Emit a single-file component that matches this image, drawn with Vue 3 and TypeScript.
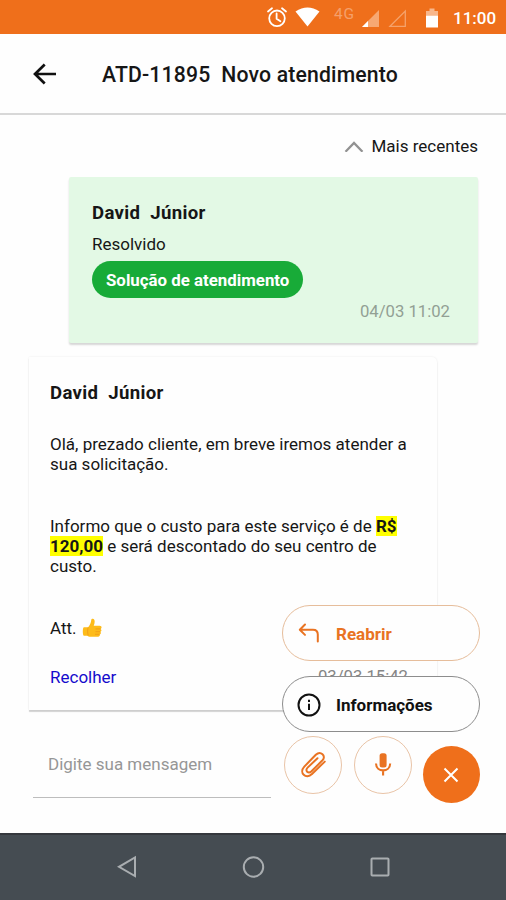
<script setup lang="ts">
interface Highlight {
  text: string
  mark: boolean
}

const title = 'ATD-11895\u00a0 Novo atendimento'
const author = 'David\u00a0 Júnior'
const cost: Highlight[] = [
  { text: 'Informo que o custo para este serviço é de ', mark: false },
  { text: 'R$ 120,00', mark: true },
  { text: ' e será descontado do seu centro de custo.', mark: false },
]
</script>

<template>
  <div class="screen">
    <div class="status">
      <svg class="status-icons" viewBox="0 0 186 34" fill="none">
        <g stroke="#fff" stroke-width="1.8" stroke-linecap="round">
          <circle cx="20" cy="18.300" r="7.800" />
          <path d="M11 11.500l4-3.200M29 11.500l-4-3.200M19.600 13.500v5.200l3.800 2.600" />
        </g>
        <path d="M38.500 11.500Q50.500 3.500 62.500 11.500L50.500 26.500z" fill="#fff" />
        <path d="M105 27L122 10v17z" fill="#f7a873" />
        <path d="M105 27l6-6v6z" fill="#fff" />
        <path d="M133 26.300L148.300 11v15.300z" stroke="#f5a26b" stroke-width="1.300" />
        <path d="M169 11h3.500V8.500h5V11h3.500v4.500h-12z" fill="#f8b78c" />
        <path d="M169 15.500h12V27.500h-12z" fill="#fff" />
      </svg>
      <span class="network">4G</span>
      <span class="clock">11:00</span>
    </div>

    <header class="header">
      <svg class="back" viewBox="0 0 26 24" fill="none" stroke="#111" stroke-width="2.700">
        <path d="M24 12H3M12.700 2.500L3 12l9.700 9.500" />
      </svg>
      <h1 class="title">{{ title }}</h1>
    </header>

    <main class="thread">
      <div class="recent">
        <svg class="chevron" viewBox="0 0 20 12" fill="none" stroke="#929292" stroke-width="2.300">
          <path d="M1.500 11.700L10 3l8.500 8.700" />
        </svg>
        <span>Mais recentes</span>
      </div>

      <article class="card resolved">
        <h2 class="author">{{ author }}</h2>
        <p class="state">Resolvido</p>
        <span class="badge">Solução de atendimento</span>
        <time class="time">04/03 11:02</time>
      </article>

      <article class="card message">
        <h2 class="author">{{ author }}</h2>
        <p class="text greeting">Olá, prezado cliente, em breve iremos atender a sua solicitação.</p>
        <p class="text cost"><template v-for="(part, i) in cost" :key="i"><mark v-if="part.mark">{{ part.text }}</mark><template v-else>{{ part.text }}</template></template></p>
        <p class="text sign">
          <span>Att.</span>
          <svg class="thumb" viewBox="0 0 20 20">
            <path d="M2 9.200h4.200C8 7 9 4.800 9.200 2.300 9.300.5 11.700.4 12.400 2c.6 1.700.1 4-.7 5.800h6c2.200 0 2.400 2.600.9 3.100 1.300.8 1 2.500-.3 2.800 1 .9.600 2.300-.6 2.600.6 1.100-.1 2.400-1.500 2.400H8.500c-1.500 0-2.500-.5-3.500-1H2c-1.600 0-1.600-8.500 0-8.500z" fill="#fdbb19" />
            <path d="M6.200 9.300c-.8 2.300-.8 5.300 0 8.100M13.500 10.900h5M13.500 13.700h4.700M13 16.300h4.500" fill="none" stroke="#ef9717" stroke-width=".8" />
          </svg>
        </p>
        <footer class="card-foot">
          <a class="collapse">Recolher</a>
          <time class="sent">03/03 15:42</time>
        </footer>
      </article>
    </main>

    <section class="composer">
      <div class="field">Digite sua mensagem</div>
    </section>

    <nav class="system">
      <svg viewBox="0 0 24 24"><path d="M21 2.500v18.500L5 11.800z" /></svg>
      <svg viewBox="0 0 24 24"><circle cx="12.500" cy="12" r="9.700" /></svg>
      <svg viewBox="0 0 24 24"><rect x="3.500" y="3.500" width="17" height="17" rx=".8" /></svg>
    </nav>

    <div class="actions">
      <button class="pill reopen">
        <svg viewBox="0 0 24 24" fill="none" stroke="currentColor" stroke-width="2" stroke-linecap="round" stroke-linejoin="round">
          <path d="M8 2.500L2.800 7.700 8 12.900M3.500 7.700H16c3.200 0 4.800 1.700 4.800 4.800V19.500" />
        </svg>
        <span>Reabrir</span>
      </button>
      <button class="pill info">
        <svg viewBox="0 0 24 24" fill="none" stroke="currentColor" stroke-width="2">
          <circle cx="12" cy="12" r="10.500" />
          <path d="M12 10.700v6.300M12 6.700v2.200" />
        </svg>
        <span>Informações</span>
      </button>
      <div class="round-row">
        <button class="round">
          <svg viewBox="0 0 30 30" fill="none" stroke="#e97322" stroke-width="2" stroke-linecap="round" stroke-linejoin="round">
            <path d="M26.800 11.600L14 24C8 29.800.5 22.800 6.300 16.600L17.800 4.800C22.600 .2 28.600 6 24.500 10.300L13.500 21.200C10.200 24.300 6.500 20.600 9.600 17.600L19.500 8.200" />
          </svg>
        </button>
        <button class="round">
          <svg viewBox="0 0 30 30" fill="none">
            <rect x="11.600" y="3.300" width="7" height="14.200" rx="2.500" fill="#e97322" />
            <path d="M8 13.500c.2 9.200 14 9.200 14.200 0M15.100 20.500v5" stroke="#e97322" stroke-width="2.100" />
          </svg>
        </button>
        <button class="fab">
          <svg viewBox="0 0 24 24" fill="none" stroke="#fff" stroke-width="2">
            <path d="M4.500 5.500l13 13M17.500 5.500l-13 13" />
          </svg>
        </button>
      </div>
    </div>
  </div>
</template>

<style>
body {
  margin: 0;
  background: #fefefe;
}
</style>

<style scoped>
* {
  box-sizing: border-box;
}

.screen {
  position: relative;
  display: flex;
  flex-direction: column;
  width: 506px;
  height: 900px;
  overflow: hidden;
  background: #fefefe;
  color: #161616;
  font-family: Roboto, "Liberation Sans", sans-serif;
  font-size: 17px;
  line-height: 20px;
}

h1,
h2,
p {
  margin: 0;
}

.status {
  position: relative;
  display: flex;
  justify-content: flex-end;
  align-items: center;
  flex: none;
  height: 34px;
  padding-right: 10px;
  background: #ef6f1b;
  color: #fff;
}

.status-icons {
  width: 186px;
  height: 34px;
  margin-right: 10px;
}

.network {
  position: absolute;
  left: 334px;
  top: 4px;
  font-size: 15.5px;
  letter-spacing: 0.8px;
  color: #f5a06a;
}

.clock {
  width: 43px;
  padding-top: 2px;
  font-size: 17px;
  font-weight: 500;
  white-space: nowrap;
}

.header {
  display: flex;
  align-items: center;
  flex: none;
  height: 81px;
  padding: 0 32px;
  border-bottom: 2px solid #d8d8d8;
}

.back {
  width: 26px;
  height: 24px;
  margin-right: 44px;
}

.title {
  padding-top: 2px;
  font-size: 21.2px;
  font-weight: 500;
  letter-spacing: 0.17px;
  line-height: 26px;
  white-space: nowrap;
}

.thread {
  display: flex;
  flex-direction: column;
  flex: none;
  padding: 21px 28px 0 29px;
}

.recent {
  display: flex;
  align-items: center;
  align-self: flex-end;
  gap: 8px;
}

.chevron {
  width: 20px;
  height: 12px;
}

.card {
  display: flex;
  flex-direction: column;
}

.resolved {
  align-self: flex-end;
  width: 409px;
  height: 166px;
  margin-top: 21px;
  padding: 24px 28px 0 23px;
  border-radius: 2px;
  background: #e3f9e5;
  box-shadow: 0 2px 2px rgba(0, 0, 0, 0.16);
}

.author {
  font-size: 18.6px;
  font-weight: 700;
  letter-spacing: 0.33px;
  line-height: 24px;
}

.state {
  margin-top: 9px;
}

.badge {
  align-self: flex-start;
  height: 37px;
  margin-top: 7px;
  padding: 0 14px;
  border-radius: 19px;
  background: #18ab38;
  color: #fff;
  font-size: 16.85px;
  font-weight: 700;
  line-height: 39px;
}

.time {
  align-self: flex-end;
  margin-top: 4px;
  color: #92a094;
  font-size: 16.7px;
}

.message {
  width: 408px;
  height: 353px;
  margin-top: 14px;
  padding: 24px 28px 0 21px;
  border-radius: 0 5px 2px 0;
  background: #fefefe;
  box-shadow: 0 2px 1px rgba(0, 0, 0, 0.17), 0 0 2px rgba(0, 0, 0, 0.09);
}

.greeting {
  margin-top: 29px;
}

.cost {
  margin-top: 42px;
}

mark {
  background: #ff0;
  color: inherit;
  font-weight: 700;
}

.sign {
  display: flex;
  align-items: center;
  gap: 5px;
  margin-top: 42px;
}

.thumb {
  width: 20px;
  height: 20px;
}

.card-foot {
  display: flex;
  justify-content: space-between;
  margin-top: 29px;
  color: #858585;
}

.sent {
  padding-right: 1px;
  font-size: 16.7px;
}

.collapse {
  color: #150bcc;
}

.composer {
  flex: 1;
  padding: 34px 33px 0;
}

.field {
  width: 238px;
  height: 54px;
  padding: 10px 15px 0;
  border-bottom: 1px solid #bdbdbd;
  color: #969696;
}

.system {
  display: flex;
  justify-content: center;
  flex: none;
  gap: 103px;
  height: 67px;
  padding-top: 20px;
  border-top: 2px solid #35383d;
  background: #454c52;
}

.system svg {
  width: 24px;
  height: 24px;
  fill: none;
  stroke: #a9adb0;
  stroke-width: 2;
}

.actions {
  position: absolute;
  left: 282px;
  top: 605px;
  width: 198px;
}

button {
  display: flex;
  align-items: center;
  padding: 0;
  background: #fefefe;
  font: inherit;
}

.pill {
  width: 198px;
  height: 56px;
  margin-bottom: 15px;
  padding: 1px 0 0 14px;
  gap: 15px;
  border: 1px solid #e6bd9b;
  border-radius: 28px;
  font-weight: 700;
}

.pill svg {
  width: 24px;
  height: 24px;
}

.reopen {
  color: #e97322;
}

.info {
  margin-bottom: 4px;
  border-color: #8d8d8d;
  color: #111;
}

.round-row {
  display: flex;
  gap: 12px;
  padding-left: 2px;
}

.round,
.fab {
  justify-content: center;
  flex: none;
  width: 58px;
  height: 58px;
  border: 1px solid #e9c4a7;
  border-radius: 50%;
}

.round svg {
  width: 30px;
  height: 30px;
}

.fab {
  width: 57px;
  height: 57px;
  margin: 10px 0 0 -1px;
  border: 0;
  background: #ef6f1b;
}

.fab svg {
  width: 24px;
  height: 24px;
}
</style>
